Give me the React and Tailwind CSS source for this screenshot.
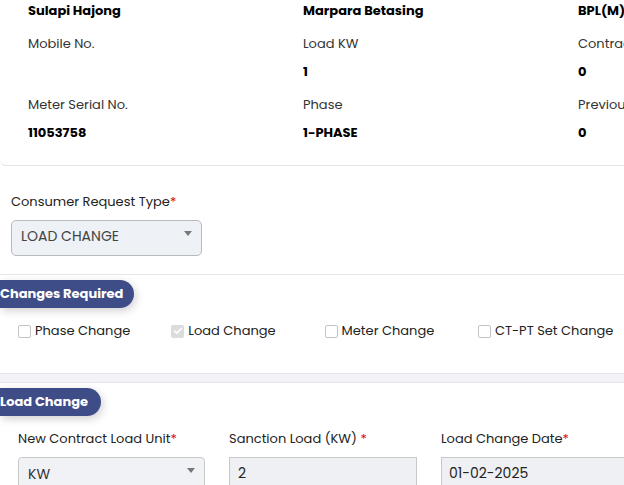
import { Check } from 'lucide-react';

const Field = ({ label, value }) => (
  <div>
    <div className="mt-[13px] h-5 leading-5 text-[#333]">{label}</div>
    <div className="mt-[8px] h-5 leading-5 font-bold text-black">{value}</div>
  </div>
);

const Caret = () => (
  <span className="absolute right-[9px] top-[10px] w-0 h-0 border-l-[4px] border-r-[4px] border-t-[5px] border-l-transparent border-r-transparent border-t-[#777]" />
);

const Pill = ({ children, w }) => (
  <div className={`h-7 ${w} flex items-center rounded-r-full bg-[#3e4c87] text-white font-bold text-[13px] shadow-[2px_3px_8px_rgba(0,0,0,0.18)]`}>
    {children}
  </div>
);

const Box = ({ checked, label }) => (
  <label className="flex items-center gap-[4px] w-[153.3px] shrink-0">
    <span className={`w-[13px] h-[13px] shrink-0 rounded-[2px] border flex items-center justify-center ${checked ? 'bg-[#dcdcdc] border-[#dcdcdc]' : 'bg-white border-[#c4c4c4]'}`}>
      {checked && <Check size={10} strokeWidth={4} className="text-white" />}
    </span>
    <span className="text-[13px] text-[#222] whitespace-nowrap">{label}</span>
  </label>
);

export default function App() {
  return (
    <div className="w-[624px] h-[485px] overflow-hidden bg-white text-[13px]" style={{ fontFamily: 'Poppins, "Open Sans", sans-serif' }}>
      {/* consumer summary */}
      <div className="w-[900px] border-b border-[#e4e4e4] rounded-bl-md pl-[28px] pb-[22px]">
        <div className="grid grid-cols-[275px_275px_275px] whitespace-nowrap">
          <div>
            <div className="mt-[1px] h-5 leading-5 font-bold text-black">Sulapi Hajong</div>
            <Field label="Mobile No." value="" />
            <Field label="Meter Serial No." value="11053758" />
          </div>
          <div>
            <div className="mt-[1px] h-5 leading-5 font-bold text-black">Marpara Betasing</div>
            <Field label="Load KW" value="1" />
            <Field label="Phase" value="1-PHASE" />
          </div>
          <div>
            <div className="mt-[1px] h-5 leading-5 font-bold text-black">BPL(M)</div>
            <Field label="Contract Demand" value="0" />
            <Field label="Previous Reading" value="0" />
          </div>
        </div>
      </div>

      {/* request type */}
      <div className="pl-[11px] pt-[26px] pb-[18px] border-b border-[#e6e6e6]">
        <div className="h-5 leading-5 text-[#222]">
          Consumer Request Type<span className="text-red-600">*</span>
        </div>
        <div className="relative mt-2 w-[191px] h-[36px] rounded-[5px] border border-[#b9b9b9] bg-[#eef1f6] pl-[9px] pb-[3px] flex items-center text-[14px] text-[#444]">
          LOAD CHANGE
          <Caret />
        </div>
      </div>

      {/* changes required */}
      <div className="pt-[5px] pb-[32px]">
        <Pill w="w-[134px]">Changes Required</Pill>
        <div className="flex h-5 pl-[18px] mt-[13px]">
          <Box label="Phase Change" />
          <Box checked label="Load Change" />
          <Box label="Meter Change" />
          <Box label="CT-PT Set Change" />
        </div>
      </div>

      <div className="h-[10px] bg-[#f2f2f7] border-y border-[#e6e6ea]" />

      {/* load change */}
      <div className="pt-[5px]">
        <Pill w="w-[101px]">Load Change</Pill>
        <div className="flex gap-[24px] pl-[18px] mt-[13px]">
          <div className="w-[187px] shrink-0">
            <div className="h-5 leading-5 text-[#222]">New Contract Load Unit<span className="text-red-600">*</span></div>
            <div className="relative mt-2 h-[36px] rounded-[4px] border border-[#c8c8c8] bg-[#f1f2f6] pl-[9px] pb-[2px] flex items-center text-[14px] text-[#333]">
              KW
              <Caret />
            </div>
          </div>
          <div className="w-[188px] shrink-0">
            <div className="h-5 leading-5 text-[#222]">Sanction Load (KW) <span className="text-red-600">*</span></div>
            <div className="mt-2 h-[36px] border border-[#c8c8c8] bg-[#eef0f4] pl-[8px] pb-[3px] flex items-center text-[14px] text-[#222]">2</div>
          </div>
          <div className="w-[200px] shrink-0">
            <div className="h-5 leading-5 text-[#222] whitespace-nowrap">Load Change Date<span className="text-red-600">*</span></div>
            <div className="mt-2 h-[36px] border border-[#c8c8c8] bg-[#eef0f4] pl-[7px] pb-[3px] flex items-center text-[14px] text-[#222]">01-02-2025</div>
          </div>
        </div>
      </div>
    </div>
  );
}
